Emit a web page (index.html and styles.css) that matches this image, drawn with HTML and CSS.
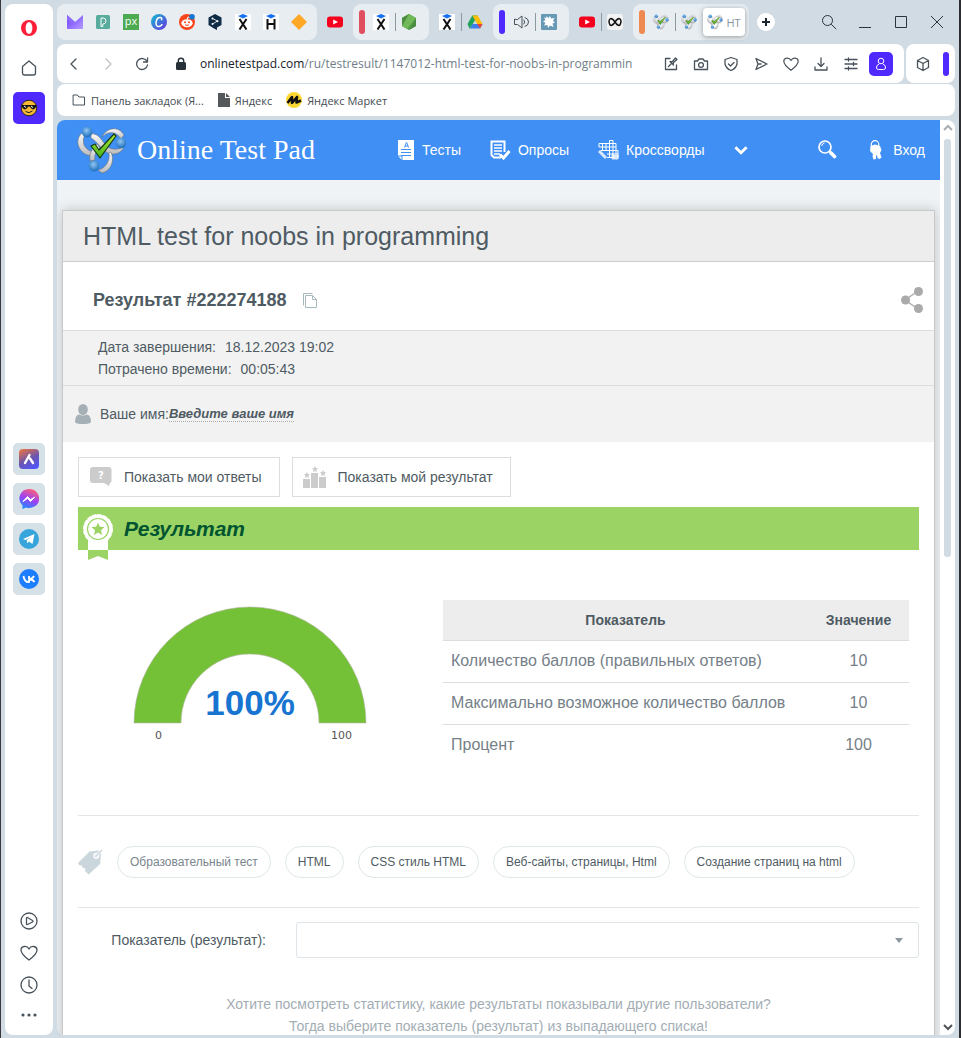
FILE: index.html
```html
<!DOCTYPE html>
<html lang="ru">
<head>
<meta charset="utf-8">
<meta name="viewport" content="width=device-width, initial-scale=1">
<title>HTML test for noobs in programming</title>
<link rel="stylesheet" href="styles.css">
</head>
<body>
<svg class="defs" aria-hidden="true">
  <defs>
    <linearGradient id="metal" x1="0" y1="0" x2="0" y2="1"><stop offset="0" stop-color="#f8f8f8"/><stop offset="1" stop-color="#bcbcbe"/></linearGradient>
    <radialGradient id="ball" cx=".45" cy=".35" r=".7"><stop offset="0" stop-color="#8fc6f2"/><stop offset="1" stop-color="#1467b8"/></radialGradient>
    <linearGradient id="tick" x1="0" y1="0" x2="0" y2="1"><stop offset="0" stop-color="#b7ee3c"/><stop offset="1" stop-color="#3fae16"/></linearGradient>
    <linearGradient id="violet" x1="0" y1="0" x2="1" y2="1"><stop offset="0" stop-color="#6a3cff"/><stop offset="1" stop-color="#b79cff"/></linearGradient>
    <linearGradient id="canva" x1="0" y1="0" x2="1" y2="1"><stop offset="0" stop-color="#12bfd0"/><stop offset="1" stop-color="#6a2fe0"/></linearGradient>
    <linearGradient id="aria" x1=".3" y1="0" x2=".8" y2="1"><stop offset="0" stop-color="#d9704f"/><stop offset=".5" stop-color="#6a55b0"/><stop offset="1" stop-color="#5057ff"/></linearGradient>
    <linearGradient id="msgr" x1=".7" y1="0" x2=".3" y2="1"><stop offset="0" stop-color="#ff6472"/><stop offset=".5" stop-color="#a040f4"/><stop offset="1" stop-color="#1a8cff"/></linearGradient>
    <symbol id="logo" viewBox="0 0 50 48">
      <g fill="url(#metal)" stroke="#6d7076" stroke-width=".6">
        <path d="M5 7C-1 12-1 22 8 28c4 2 7 2 9 1l1-3c-5 0-9-3-11-7-1-4-1-7 1-10z"/>
        <path d="M25 11C29 2 41-1 47 9l-3 4c-4-7-12-9-19-2z"/>
        <path d="M14 8c5-1 9 3 13 9 4 5 9 8 17 5l3-1c-3 7-11 9-18 5-6-4-9-11-15-14z"/>
        <path d="M13 35c-1-7 2-13 7-17l3 4c-4 3-6 7-5 12z"/>
        <path d="M34 26c4 9 0 19-9 21l-4-3c8-2 12-9 11-17z"/>
      </g>
      <g fill="url(#ball)"><circle cx="10" cy="6" r="5.200"/><circle cx="44" cy="17" r="5.200"/><circle cx="17" cy="40" r="5.400"/></g>
      <path d="M14 20l4-2 4 6L37 8l2 2-16 22z" fill="url(#tick)" stroke="#153c10" stroke-width="1.200" stroke-linejoin="round"/>
    </symbol>
    <symbol id="youtube" viewBox="0 0 16 16"><rect y="2.500" width="16" height="11" rx="3" fill="#f5001d"/><path d="M6.200 5.400v5.200L11 8z" fill="#fff"/></symbol>
    <symbol id="hexlet" viewBox="0 0 16 16"><rect width="16" height="16" fill="#fff"/><path d="M8 0l5 2-5 2.400L3 2z" fill="#1670f0"/><path d="M4.500 5l7 10.500M11.500 5l-7 10.500" stroke="#111" stroke-width="2"/></symbol>
    <symbol id="heart" viewBox="0 0 20 20"><path d="M10 17C6 14 2 11 2 7c0-4 6-5 8-1 2-4 8-3 8 1 0 4-4 7-8 10z"/></symbol>
    <symbol id="caret" viewBox="0 0 10 10"><path d="M1 3l4 4 4-4"/></symbol>
  </defs>
</svg>

<div class="window">
  <aside class="sidebar">
    <div class="side-group">
      <button class="side-btn" aria-label="Opera"><svg width="18" height="18" viewBox="0 0 18 18"><ellipse cx="9" cy="9" rx="8" ry="8" fill="#fa1e37"/><ellipse cx="9" cy="9" rx="3.400" ry="6" fill="#fff"/></svg></button>
      <button class="side-btn" aria-label="Домой"><svg class="line" width="18" height="18" viewBox="0 0 18 18"><path d="M2.500 7.500L9 2l6.500 5.500V14q0 2-2 2h-9q-2 0-2-2z"/></svg></button>
      <button class="side-btn side-active" aria-label="Рабочее пространство"><svg width="18" height="18" viewBox="0 0 18 18"><circle cx="9" cy="9" r="7.800" fill="#f9b934" stroke="#242424"/><path d="M1.500 6h15l-1 3q-2.500 3-5-.5l-1-1h-1l-1 1q-2.500 3.500-5 .5z" fill="#151515"/><path d="M4 7l2 1.500M11 7l2 1.500" stroke="#fff"/><path d="M5.500 12.500q3.500 2.500 7-.5" fill="none" stroke="#242424"/></svg></button>
    </div>
    <div class="side-group side-apps">
      <button class="side-btn side-app" aria-label="Aria"><svg width="20" height="20" viewBox="0 0 20 20"><rect width="20" height="20" rx="4" fill="url(#aria)"/><path d="M6 14l4.500-8M11 9.500l3 4.500" stroke="#fff" stroke-width="2.400" stroke-linecap="round"/></svg></button>
      <button class="side-btn side-app" aria-label="Messenger"><svg width="20" height="20" viewBox="0 0 20 20"><path d="M10 0a10 9.500 0 1 1-3 18.500L3.500 20v-3.500A9.500 9.500 0 0 1 10 0z" fill="url(#msgr)"/><path d="M4 12.500l4.500-5 3 3 4.500-2.500-4.500 4.500-3-3z" fill="#fff" stroke="#fff"/></svg></button>
      <button class="side-btn side-app" aria-label="Telegram"><svg width="20" height="20" viewBox="0 0 20 20"><circle cx="10" cy="10" r="10" fill="#37a5dc"/><path d="M4 10l11.500-5-2 10-3.500-2.500-1.800 1.800-.4-3.300L12 8l-5.500 3z" fill="#fff"/></svg></button>
      <button class="side-btn side-app" aria-label="VK"><svg width="20" height="20" viewBox="0 0 20 20"><circle cx="10" cy="10" r="10" fill="#1d7dff"/><path d="M4.500 7q1 6.500 5.500 6V7m5 0q-1.500 3-5 3 3.500 0 5.500 3" fill="none" stroke="#fff" stroke-width="1.800"/></svg></button>
    </div>
    <div class="side-group side-bottom">
      <button class="side-btn" aria-label="Плеер"><svg class="line" width="20" height="20" viewBox="0 0 20 20"><circle cx="10" cy="10" r="8"/><path d="M7.500 7v6q0 .8 1 .5l5-2.500q1-1 0-1.500l-5-3q-1-.3-1 .5z"/></svg></button>
      <button class="side-btn" aria-label="Избранное"><svg class="line" width="20" height="20"><use href="#heart"/></svg></button>
      <button class="side-btn" aria-label="История"><svg class="line" width="20" height="20" viewBox="0 0 20 20"><circle cx="10" cy="10" r="8"/><path d="M10 5v6l3 2.500"/></svg></button>
      <button class="side-btn" aria-label="Ещё"><svg width="20" height="20" viewBox="0 0 20 20" fill="#48525b"><circle cx="4" cy="8" r="1.600"/><circle cx="10" cy="8" r="1.600"/><circle cx="16" cy="8" r="1.600"/></svg></button>
    </div>
  </aside>

  <main class="browser">
    <div class="tabs">
      <div class="group filled">
        <button class="tab" aria-label="Proton"><svg width="16" height="14" viewBox="0 0 16 14"><path d="M0 0l8 7 8-7v14H0z" fill="url(#violet)"/><path d="M0 0l8 7-2 2-6-4z" fill="#8f6bff"/></svg></button>
        <button class="tab" aria-label="P"><svg width="14" height="14" viewBox="0 0 14 14"><rect width="14" height="14" rx="1.500" fill="#57ac9d"/><path d="M5 3v8.500h1.800V9q3.200 0 3.200-3T7 3z" fill="none" stroke="#fff"/></svg></button>
        <button class="tab" aria-label="px"><svg width="16" height="16" viewBox="0 0 16 16"><rect width="16" height="16" fill="#4caa50"/><text x="8" y="11" class="mini" fill="#fff">px</text></svg></button>
        <button class="tab" aria-label="Canva"><svg width="16" height="16" viewBox="0 0 16 16"><circle cx="8" cy="8" r="8" fill="url(#canva)"/><path d="M10.500 6.300Q11.500 3 8.500 3.500T5 9q.2 4 3 3.500t3-2.500" fill="none" stroke="#fff" stroke-width="1.500"/></svg></button>
        <button class="tab" aria-label="Reddit"><svg width="16" height="16" viewBox="0 0 16 16"><circle cx="8" cy="8" r="8" fill="#f9451c"/><ellipse cx="8" cy="9.200" rx="5.600" ry="4" fill="#fff"/><path d="M8 5.500L9 3l2 .5" fill="none" stroke="#fff"/><circle cx="6" cy="8.300" r="1" fill="#f9451c"/><circle cx="10" cy="8.300" r="1" fill="#f9451c"/><path d="M6 10.700q2 1.500 4 0" fill="none" stroke="#f9451c"/><circle cx="13" cy="2.800" r="2.800" fill="#1476d2"/></svg></button>
        <button class="tab" aria-label="DeepL"><svg width="14" height="16" viewBox="0 0 14 16"><path d="M7 0l6.500 3.500V11L9 13.500V16l-3-1.500L.5 11V3.500z" fill="#0f2b46"/><path d="M4.500 4.500L9.500 7l-5 3" fill="none" stroke="#fff" stroke-width=".8"/><circle cx="4.500" cy="4.500" r="1" fill="#fff"/><circle cx="9.500" cy="7.200" r="1" fill="#fff"/><circle cx="4.500" cy="10" r="1" fill="#fff"/></svg></button>
        <button class="tab" aria-label="Hexlet"><svg width="16" height="16"><use href="#hexlet"/></svg></button>
        <button class="tab" aria-label="Hexlet"><svg width="16" height="16" viewBox="0 0 16 16"><rect width="16" height="16" fill="#fff"/><path d="M8 0l5 2-5 2.400L3 2z" fill="#1670f0"/><path d="M4.500 5v10.500m7-10.500v10.500M4.500 10h7" stroke="#111" stroke-width="2"/></svg></button>
        <button class="tab" aria-label="Вкладка"><svg width="16" height="16" viewBox="0 0 16 16"><path d="M8 0l8 8-8 8-8-8z" fill="#ffa726"/></svg></button>
      </div>
      <div class="group"><button class="tab" aria-label="YouTube"><svg width="16" height="16"><use href="#youtube"/></svg></button></div>
      <div class="group filled marked">
        <span class="marker red"></span>
        <button class="tab" aria-label="Hexlet"><svg width="16" height="16"><use href="#hexlet"/></svg></button>
        <button class="tab split" aria-label="Node.js"><svg width="16" height="16" viewBox="0 0 16 16"><path d="M8 0l7 4v8l-7 4-7-4V4z" fill="#539e43"/><path d="M8 0l7 4-9 11-5-3V4z" fill="#71b85a"/><path d="M8 0L1 12V4zM15 4L8 16l7-4z" fill="#4a8d42"/></svg></button>
      </div>
      <div class="group">
        <button class="tab" aria-label="Hexlet"><svg width="16" height="16"><use href="#hexlet"/></svg></button>
        <button class="tab split" aria-label="Google Drive"><svg width="16" height="16" viewBox="0 0 16 16"><path d="M5.300 1.500h5.400L5.500 10.500 2.700 15 .5 10z" fill="#22a45c"/><path d="M5.300 1.500h5.400L15.500 10H10.200z" fill="#fbbc04"/><path d="M5.500 10h10L13 14.500H3z" fill="#3d7eed"/><path d="M10.200 10h5.300L13 14.500z" fill="#e94335"/></svg></button>
      </div>
      <div class="group filled marked">
        <span class="marker blue"></span>
        <button class="tab" aria-label="Звук"><svg class="line thin" width="16" height="16" viewBox="0 0 16 16"><path d="M1.500 5.500v5h3L9 14V2L4.500 5.500zM11 6q1.500 2 0 4M12 3.500q3.500 1 3.500 4.500T12 12.500"/></svg></button>
        <button class="tab split" aria-label="Вкладка"><svg width="16" height="16" viewBox="0 0 16 16"><rect width="16" height="16" rx="1" fill="#6799b5"/><path d="M5 2l2.500 2L9 2l1 2.500L13.500 4 12 7l2 1.500-2.500 1 1 3.500L9 11.500 7 14l-.5-3-3.500.5L4.500 9 2 7.500 4.500 6 3 3.500 5.500 4z" fill="#fff"/></svg></button>
      </div>
      <div class="group">
        <button class="tab" aria-label="YouTube"><svg width="16" height="16"><use href="#youtube"/></svg></button>
        <button class="tab split" aria-label="Вкладка"><svg width="16" height="16" viewBox="0 0 16 16"><rect width="16" height="16" rx="3" fill="#f3f3f3"/><path d="M8 8Q5 3.500 3 5T3 11q2 1.500 5-3 3-4.500 5-3t0 6q-2 1.500-5-3" fill="none" stroke="#111" stroke-width="1.500"/></svg></button>
      </div>
      <div class="group filled marked last">
        <span class="marker orange"></span>
        <button class="tab" aria-label="Online Test Pad"><svg width="16" height="16"><use href="#logo"/></svg></button>
        <button class="tab split" aria-label="Online Test Pad"><svg width="16" height="16"><use href="#logo"/></svg></button>
        <button class="tab current"><svg width="16" height="16"><use href="#logo"/></svg><span class="tab-title">HT</span></button>
      </div>
      <button class="add" aria-label="Новая вкладка"><svg width="10" height="10" viewBox="0 0 10 10"><path d="M5 1v8M1 5h8" stroke="#1b2730" stroke-width="2"/></svg></button>
      <div class="controls">
        <button class="control" aria-label="Поиск вкладок"><svg width="16" height="16" viewBox="0 0 16 16"><circle cx="6.500" cy="6.500" r="5"/><path d="M10.200 10.200l5 5"/></svg></button>
        <button class="control" aria-label="Свернуть"><svg width="12" height="12" viewBox="0 0 12 12"><path d="M0 11.500h12"/></svg></button>
        <button class="control" aria-label="Развернуть"><svg width="12" height="12" viewBox="0 0 12 12"><path d="M.5.500h11v11H.5z"/></svg></button>
        <button class="control" aria-label="Закрыть"><svg width="12" height="12" viewBox="0 0 12 12"><path d="M0 0l12 12M12 0L0 12"/></svg></button>
      </div>
    </div>

    <div class="address-row">
      <div class="address">
        <button class="nav-btn" aria-label="Назад"><svg class="line" width="16" height="16" viewBox="0 0 16 16"><path d="M10 3L5 8l5 5"/></svg></button>
        <button class="nav-btn faded" aria-label="Вперёд"><svg class="line" width="16" height="16" viewBox="0 0 16 16"><path d="M6 3l5 5-5 5"/></svg></button>
        <button class="nav-btn" aria-label="Обновить"><svg class="line" width="16" height="16" viewBox="0 0 16 16"><path d="M13 5.500A5.500 5.500 0 1 0 13.500 9M13.500 2v4h-4"/></svg></button>
        <svg class="lock" width="12" height="14" viewBox="0 0 12 14"><rect x="1" y="5" width="10" height="8" rx="1.500" fill="#26313a"/><path d="M3.300 6V4a2.700 2.700 0 0 1 5.400 0v2" fill="none" stroke="#26313a" stroke-width="1.400"/></svg>
        <div class="url"><b>onlinetestpad.com</b>/ru/testresult/1147012-html-test-for-noobs-in-programmin</div>
        <div class="tools">
          <button class="tool" aria-label="Изменить"><svg class="line" width="16" height="16" viewBox="0 0 16 16"><path d="M7 2.500H2.500v11h11V9M5.500 10.500L8 8M7 5.500l3.500 3.500M7.500 6l2-.5L12.500 2 14 3.500 10.500 6.500 10 8.500"/></svg></button>
          <button class="tool" aria-label="Снимок"><svg class="line" width="16" height="16" viewBox="0 0 16 16"><path d="M1.500 5h3l1.500-2h4l1.500 2h3v8.500h-13z"/><circle cx="8" cy="9" r="2.400"/></svg></button>
          <button class="tool" aria-label="Защита"><svg class="line" width="16" height="16" viewBox="0 0 16 16"><path d="M8 1.500l6 2V8q-1 4.500-6 6.500Q3 12.500 2 8V3.500zM5.500 8l2 2 3.500-3.500"/></svg></button>
          <button class="tool" aria-label="Поток"><svg class="line" width="16" height="16" viewBox="0 0 16 16"><path d="M3 2.500L14 8 3 13.500 5 8zM5 8h3"/></svg></button>
          <button class="tool" aria-label="В избранное"><svg class="line" width="18" height="18"><use href="#heart"/></svg></button>
          <button class="tool" aria-label="Загрузки"><svg class="line" width="16" height="16" viewBox="0 0 16 16"><path d="M8 2v8M5 7.500L8 10.500l3-3M2 11v3h12v-3"/></svg></button>
          <button class="tool" aria-label="Настройки"><svg class="line" width="16" height="16" viewBox="0 0 16 16"><path d="M2 3.500h12M2 8h12M2 12.500h12M5.500 2v3M10.500 6.500v3M5.500 11v3"/></svg></button>
          <button class="tool user" aria-label="Профиль"><svg width="16" height="16" viewBox="0 0 16 16" fill="none" stroke="#fff"><circle cx="8" cy="5" r="2.800"/><path d="M6 8q-3 1.500-2.500 4 .2 1.500 2 1.500h5q1.800 0 2-1.500.5-2.500-2.500-4"/></svg></button>
        </div>
      </div>
      <div class="extensions">
        <button class="tool" aria-label="Расширения"><svg class="line" width="16" height="16" viewBox="0 0 16 16"><path d="M8 1.500l5.500 3v7L8 14.500l-5.500-3v-7zM2.500 4.500L8 7.500l5.500-3M8 7.500v7"/></svg></button>
        <span class="strip"></span>
      </div>
    </div>

    <nav class="bookmarks" aria-label="Закладки">
      <a href="#"><svg class="line thin" width="14" height="12" viewBox="0 0 14 12"><path d="M1.500 1h4l1.500 2h5.500v8h-11z"/></svg>Панель закладок (Я...</a>
      <a href="#"><svg width="12" height="14" viewBox="0 0 12 14"><path d="M0 0h7v5h5v9H0zM8 0l4 4H8z" fill="#55585b"/></svg>Яндекс</a>
      <a href="#"><svg width="16" height="16" viewBox="0 0 16 16"><circle cx="8" cy="8" r="8" fill="#fcd835"/><path d="M1.500 11l4.500-6v6l5-6-.5 5.500 4.500-2" fill="none" stroke="#111" stroke-width="2.600" stroke-linejoin="round"/></svg>Яндекс Маркет</a>
    </nav>

    <div class="viewport">
      <div class="page">
        <header class="site-head">
          <a class="brand" href="#"><svg width="50" height="48"><use href="#logo"/></svg><span>Online Test Pad</span></a>
          <nav class="menu">
            <a href="#"><svg width="18" height="20" viewBox="0 0 18 20"><path d="M1 0h16v20H5l-4-4z" fill="#fff"/><path d="M4 9.500h10M4 12.500h10M4 15.500h10M7.500 7.500l1.800-5h.4l1.800 5M8 6h3M1 16h4v4" fill="none" stroke="#408ff4"/></svg>Тесты</a>
            <a href="#"><svg width="21" height="20" viewBox="0 0 21 20" fill="none" stroke="#fff"><path d="M11 17.500H4L1.500 15V1.500h13V12" stroke-width="2"/><path d="M4 5h8M4 8h8M4 11h8M4 14h6" stroke-width="1.500"/><path d="M10 14.500l3.500 3.500 6-7" stroke-width="3"/></svg>Опросы</a>
            <a href="#"><svg width="21" height="20" viewBox="0 0 21 20" fill="none" stroke="#fff"><path d="M1 3.500h17M1 7h17M3 10.500h17M9 14h11M9 17.500h8M1 3.500V7M4.500 3.500v7M8 3.500v7M11.500.500V18M15 .500V18M11.500.500H15M18 3.500V14M20 10.500V18" /><path d="M1 11l7 7" stroke-width="3" opacity=".8"/><path d="M14 15h6v4h-6z" fill="#fff" opacity=".8"/></svg>Кроссворды</a>
          </nav>
          <button class="more" aria-label="Ещё"><svg width="14" height="14" viewBox="0 0 10 10"><path d="M1 3l4 4 4-4" fill="none" stroke="#fff" stroke-width="2"/></svg></button>
          <button class="find" aria-label="Поиск"><svg width="20" height="20" viewBox="0 0 20 20" fill="none" stroke="#fff"><circle cx="8" cy="7" r="6" stroke-width="1.700"/><path d="M4.500 6q.8-2.500 3-3"/><path d="M12 11l2 2" stroke-width="2"/><path d="M14 13l3.500 3.500" stroke-width="3.600" stroke-linecap="round"/></svg></button>
          <a class="login" href="#"><svg width="14" height="20" viewBox="0 0 14 20"><circle cx="6" cy="4.500" r="3.800" fill="none" stroke="#fff" stroke-width="1.200"/><path d="M1.500 6l4.500-1.500L11 6l1.500 4-1.500 3 1.500 4.500-2 1.500-2-1-.5-3-1 1V19l-2.500.5-1-3 .5-2.500L1 11z" fill="#fff"/></svg>Вход</a>
        </header>

        <article class="card">
          <h1 class="title">HTML test for noobs in programming</h1>
          <div class="result-line">
            <h2>Результат #222274188</h2>
            <button class="copy" aria-label="Копировать"><svg width="14" height="15" viewBox="0 0 14 15" fill="none" stroke="#a6b9bf"><path d="M9.500 2.500h-7v12h11V6.500l-4-4v4h4M.5 12.500V.500h9"/></svg></button>
            <button class="share" aria-label="Поделиться"><svg width="24" height="26" viewBox="0 0 24 26" fill="#aaa"><path d="M18 4L5 13l13 9" fill="none" stroke="#aaa" stroke-width="1.300"/><circle cx="5.500" cy="13" r="4.500"/><circle cx="18.500" cy="4.500" r="4.500"/><circle cx="18.500" cy="21.500" r="4.500"/></svg></button>
          </div>
          <dl class="facts">
            <div><dt>Дата завершения:</dt><dd>18.12.2023 19:02</dd></div>
            <div><dt>Потрачено времени:</dt><dd>00:05:43</dd></div>
          </dl>
          <div class="person">
            <svg width="16" height="20" viewBox="0 0 16 20" fill="#a5b0b6"><ellipse cx="8" cy="5.500" rx="4.800" ry="5.500"/><path d="M0 18q0-6.500 4-7.500 4 2 8 0 4 1 4 7.500-1 2-8 2t-8-2z"/></svg>
            <span>Ваше имя:</span><a href="#">Введите ваше имя</a>
          </div>

          <div class="body">
            <div class="actions">
              <button class="action"><svg width="24" height="20" viewBox="0 0 24 20"><path d="M4 0h16q2.500 0 2.500 3v10q0 3-1.500 3l-1 3-5-3H4q-3 0-3-3V3q0-3 3-3z" fill="#ccc"/><text x="12" y="12" class="ask" fill="#fff">?</text></svg>Показать мои ответы</button>
              <button class="action"><svg width="24" height="22" viewBox="0 0 24 22" fill="#ccc"><path d="M0 13h7v9H0zM8 7h7v15H8zM16 11h7v11h-7z"/><path id="st" d="M12 0l1 2 2 .3-1.500 1.400.4 2.300-1.900-1-1.900 1 .4-2.300L9 2.300l2-.3z"/><use href="#st" x="-8" y="6"/><use href="#st" x="8" y="4"/></svg>Показать мой результат</button>
            </div>
            <h3 class="banner"><svg class="medal" width="32" height="48" viewBox="0 0 32 48"><path d="M6 22h20v15H6z" fill="#fff"/><path d="M6 37h20v10l-10-4-10 4z" fill="#9bd464"/><circle cx="16" cy="16" r="13.700" fill="#fff"/><circle cx="16" cy="16" r="13.800" fill="none" stroke="#fff" stroke-width="2.400" stroke-dasharray="3 2.400" stroke-linecap="round"/><circle cx="16" cy="16" r="10.500" fill="none" stroke="#9bd464" stroke-width="1.200"/><path d="M16 9.500l1.800 4.200 4.700.4-3.500 3.200 1 4.700-4-2.500-4 2.500 1-4.700-3.500-3.200 4.700-.4z" fill="#9bd464"/></svg>Результат</h3>
            <div class="scores">
              <div class="gauge">
                <svg viewBox="0 0 234 118" role="img" aria-label="100%"><path d="M1 117a116 116 0 0 1 232 0h-47a69 69 0 0 0-138 0z" fill="#74c037" stroke="#b5b5a8" stroke-width=".6"/></svg>
                <strong>100%</strong>
                <div class="scale"><span>0</span><span>100</span></div>
              </div>
              <table class="table">
                <thead><tr><th>Показатель</th><th>Значение</th></tr></thead>
                <tbody>
                  <tr><td>Количество баллов (правильных ответов)</td><td>10</td></tr>
                  <tr><td>Максимально возможное количество баллов</td><td>10</td></tr>
                  <tr><td>Процент</td><td>100</td></tr>
                </tbody>
              </table>
            </div>
            <div class="tags">
              <svg width="25" height="26" viewBox="0 0 26 26"><path d="M0 14L12 2l9-1 3 3-1 11-12 11-4-4 1-2-3-1-1-2-3-1z" fill="#cbd5dc"/><circle cx="19" cy="6.500" r="2.500" fill="#cbd5dc" stroke="#fff" stroke-width="1.400"/><path d="M18.500 7L25 .5" stroke="#fff" stroke-width="3"/><path d="M18.500 7L25 .5" stroke="#cbd5dc" stroke-width="1.500"/></svg>
              <a class="tag pale" href="#">Образовательный тест</a>
              <a class="tag" href="#">HTML</a>
              <a class="tag" href="#">CSS стиль HTML</a>
              <a class="tag" href="#">Веб-сайты, страницы, Html</a>
              <a class="tag" href="#">Создание страниц на html</a>
            </div>
            <div class="metric">
              <label for="metric">Показатель (результат):</label>
              <div class="select-wrap"><select id="metric"><option></option></select></div>
            </div>
            <p class="hint">Хотите посмотреть статистику, какие результаты показывали другие пользователи?<br>Тогда выберите показатель (результат) из выпадающего списка!</p>
          </div>
        </article>
      </div>
      <div class="scrollbar">
        <svg class="up" width="10" height="10"><use href="#caret"/></svg>
        <span class="thumb"></span>
        <svg class="down" width="10" height="10"><use href="#caret"/></svg>
      </div>
    </div>
  </main>
</div>
</body>
</html>
```
FILE: styles.css
```css
* { box-sizing: border-box; }
body {
  margin: 0;
  font-family: "Liberation Sans", Arial, sans-serif;
  font-size: 14px;
  color: #4f5b63;
}
button { border: 0; padding: 0; background: none; font: inherit; color: inherit; }
a { color: inherit; text-decoration: none; }
h1, h2, h3, p, dl, dd { margin: 0; }
svg { flex: none; display: block; }
.defs { position: absolute; width: 0; height: 0; }
.line { fill: none; stroke: #48525b; stroke-width: 1.3; stroke-linecap: round; stroke-linejoin: round; }
.thin { stroke-width: 1; }

.window {
  display: flex;
  gap: 4px;
  height: 100vh;
  padding: 4px 4px 3px;
  background: #d0dbe3;
  border-left: 1px solid #38383d;
  border-right: 2px solid #2c2d30;
  overflow: hidden;
}

/* Sidebar */
.sidebar {
  flex: none;
  width: 48px;
  padding: 8px 8px 2px;
  background: #fff;
  border-radius: 8px;
  display: flex;
  flex-direction: column;
  justify-content: space-between;
}
.side-group { display: flex; flex-direction: column; gap: 8px; }
.side-apps { padding-top: 8px; }
.side-bottom { gap: 0; }
.side-btn { width: 32px; height: 32px; border-radius: 5px; display: grid; place-items: center; }
.side-active { background: #5029ff; }
.side-app { background: #d5e0e7; }

/* Browser chrome */
.browser { flex: 1; min-width: 0; display: flex; flex-direction: column; }
.tabs { display: flex; gap: 4px; height: 36px; margin-bottom: 4px; }
.group { display: flex; align-items: center; border-radius: 8px; }
.filled { background: #e7edf1; padding: 0 4px; }
.marked { padding: 0 6px; }
.last { padding-right: 4px; }
.marker { width: 6px; height: 24px; border-radius: 3px; margin-right: 2px; }
.red { background: #e04f60; }
.blue { background: #5029ff; }
.orange { background: #ee8a51; }
.tab { position: relative; width: 28px; height: 28px; display: flex; align-items: center; justify-content: center; }
.split::before { content: ""; position: absolute; left: 0; top: 5px; width: 1px; height: 18px; background: #8d99a1; }
.current {
  width: 42px;
  padding: 0 3px;
  gap: 3px;
  background: #fff;
  border-radius: 4px;
  box-shadow: 0 1px 5px rgba(0, 0, 0, .35);
}
.tab-title { white-space: nowrap; font: 11px "Open Sans", sans-serif; color: #88939b; }
.mini { font: 11px "Open Sans", sans-serif; text-anchor: middle; }
.add { width: 18px; height: 18px; margin: 9px 0 0 4px; border-radius: 50%; background: #fff; display: grid; place-items: center; }
.controls { display: flex; margin-left: auto; }
.control { width: 36px; height: 36px; display: grid; place-items: center; }
.control svg { fill: none; stroke: #29343c; }

.address-row { display: flex; gap: 2px; height: 39px; margin-bottom: 1px; }
.address { flex: 1; min-width: 0; background: #fff; border-radius: 8px; display: flex; align-items: center; padding: 0 11px 0 2px; }
.nav-btn { width: 30px; height: 30px; display: grid; place-items: center; }
.nav-btn + .nav-btn { margin-left: 4px; }
.faded { opacity: .35; }
.lock { margin: 0 13px 0 18px; }
.url { flex: 1; min-width: 0; overflow: hidden; white-space: nowrap; font: 12px "Open Sans", sans-serif; color: #6f7e88; }
.url b { font-weight: normal; color: #17212a; }
.tools { display: flex; gap: 6px; margin-left: 16px; }
.tool { width: 24px; height: 24px; display: grid; place-items: center; }
.user { background: #5029ff; border-radius: 5px; }
.extensions { width: 49px; background: #fff; border-radius: 8px; display: flex; align-items: center; justify-content: space-between; padding: 0 6px 0 5px; }
.strip { width: 6px; height: 24px; border-radius: 3px; background: #5029ff; }

.bookmarks {
  display: flex;
  align-items: center;
  gap: 14px;
  height: 32px;
  margin-bottom: 4px;
  padding: 0 15px;
  background: #fff;
  border-radius: 8px;
  font: 11px "Open Sans", sans-serif;
  color: #444c52;
}
.bookmarks a { display: flex; align-items: center; gap: 5px; }

/* Page */
.viewport { flex: 1; min-height: 0; display: flex; overflow: hidden; border-radius: 8px; }
.page { flex: 1; min-width: 0; background: #eff3f5; overflow: hidden; }
.scrollbar { width: 15px; background: #fff; display: flex; flex-direction: column; align-items: center; padding: 3px 0; gap: 6px; }
.scrollbar svg { fill: none; stroke: #4e5357; stroke-width: 2; }
.scrollbar .up { transform: rotate(180deg); stroke: #a9aeb2; }
.scrollbar .down { margin-top: auto; }
.thumb { width: 7px; height: 46%; border-radius: 3px; background: #d0dbe3; }

.site-head { display: flex; align-items: center; height: 60px; padding: 0 15px 0 20px; background: #408ff4; color: #fff; }
.brand { display: flex; align-items: center; gap: 10px; font: 28px "Liberation Serif", serif; white-space: nowrap; }
.menu { display: flex; gap: 29px; margin-left: 82px; }
.menu a, .login { display: flex; align-items: center; gap: 7px; }
.more { margin-left: 29px; }
.find { margin-left: auto; }
.login { margin-left: 32px; gap: 10px; }

.card { margin: 30px 5px 0; min-height: 100%; background: #fff; border: 1px solid #c9c9c9; box-shadow: 0 0 12px rgba(0, 0, 0, .2); }
.title { padding: 10px 20px; line-height: 30px; font-size: 25px; font-weight: normal; background: #ededed; border-bottom: 1px solid #ccc; }
.result-line { display: flex; align-items: center; height: 69px; padding: 8px 10px 0 30px; border-bottom: 1px solid #ddd; }
.result-line h2 { font-size: 18px; line-height: 22px; }
.copy { margin-left: 16px; }
.share { margin-left: auto; }
.facts { padding: 5px 35px; line-height: 22px; background: #f2f2f2; border-bottom: 1px solid #ddd; }
.facts div { display: flex; gap: 9px; }
.person { display: flex; align-items: center; height: 56px; padding: 0 12px; background: #f2f2f2; }
.person span { margin-left: 9px; }
.person a { font-size: 13px; font-weight: bold; font-style: italic; border-bottom: 1px dotted #aaa; }

.body { padding: 15px; }
.actions { display: flex; gap: 12px; }
.action { display: flex; align-items: center; gap: 11px; height: 40px; padding: 0 17px 0 10px; border: 1px solid #ddd; }
.ask { font: bold 10px "DejaVu Sans", sans-serif; text-anchor: middle; }
.banner {
  position: relative;
  margin-top: 10px;
  padding: 0 46px;
  line-height: 43px;
  font-size: 21px;
  font-style: italic;
  color: #005430;
  background: #9bd464;
}
.medal { position: absolute; left: 4px; top: 6px; }

.scores { display: flex; align-items: flex-start; justify-content: space-between; padding: 50px 10px 49px 55px; }
.gauge { position: relative; width: 234px; margin-top: 6px; }
.gauge strong { position: absolute; left: 0; right: 0; top: 77px; text-align: center; font-size: 35px; line-height: 40px; color: #1874d1; }
.scale { display: flex; justify-content: space-between; padding: 5px 15px 0 22px; font: 11px "DejaVu Sans", sans-serif; color: #555; }

.table { width: 466px; border-collapse: collapse; font-size: 16px; color: #758088; }
.table th { height: 40px; padding: 0 8px; font-size: 14px; color: #4f5b63; background: #ededed; }
.table td { height: 42px; padding: 0 8px; border-top: 1px solid #ddd; }
.table th:last-child, .table td:last-child { width: 101px; text-align: center; }

.tags { display: flex; align-items: center; gap: 14px; padding: 30px 0 29px; border: 1px solid #e2e6e8; border-width: 1px 0; font-size: 12px; }
.tag { padding: 0 12px; line-height: 30px; border: 1px solid #dfe7ea; border-radius: 16px; white-space: nowrap; }
.pale { color: #7b868d; }

.metric { display: flex; align-items: center; gap: 30px; padding-top: 14px; }
.metric label { width: 188px; text-align: right; white-space: nowrap; }
.select-wrap { position: relative; flex: 1; }
.select-wrap::after {
  content: "";
  position: absolute;
  right: 16px;
  top: 16px;
  border: 4px solid transparent;
  border-top: 5px solid #8c989e;
  border-bottom: 0;
  pointer-events: none;
}
.metric select { appearance: none; display: block; width: 100%; height: 36px; padding: 0 24px 0 12px; font: inherit; background: #fff; border: 1px solid #dfe5e8; border-radius: 3px; }
.hint { margin-top: 35px; text-align: center; line-height: 22px; color: #a3adb4; }
```
